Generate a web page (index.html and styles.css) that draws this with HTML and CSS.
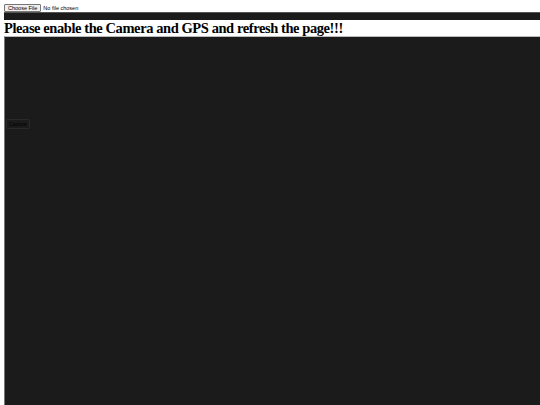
FILE: index.html
```html
<!DOCTYPE html>
<html>
<head>
<meta charset="utf-8">
<link rel="stylesheet" href="styles.css">
</head>
<body>
<div class="file-row"><span class="file-btn">Choose File</span><span class="file-text">No file chosen</span></div>
<div class="bar"></div>
<h1 class="title">Please enable the Camera and GPS and refresh the page!!!</h1>
<div class="view">
  <span class="capture">Capture</span>
</div>
</body>
</html>
```
FILE: styles.css
```css
html, body { margin: 0; padding: 0; background: #fff; }
body { padding: 3px 0 0 4px; overflow: hidden; height: 405px; box-sizing: border-box; }
.file-row { display: flex; align-items: center; height: 9px; font-family: "Liberation Sans", Arial, sans-serif; font-size: 5.5px; color: #000; }
.file-btn { display: inline-flex; align-items: center; height: 8px; padding: 0 3px; background: #efefef; border: 0.5px solid #767676; border-radius: 1px; box-sizing: border-box; }
.file-text { margin-left: 2px; }
.bar { height: 8px; background: #1b1b1b; border-top: 1px solid #555; box-sizing: border-box; }
.title { margin: 0; height: 16px; line-height: 17px; font-family: "Liberation Serif", "Times New Roman", serif; font-size: 14.5px; letter-spacing: -0.42px; font-weight: bold; color: #000; white-space: nowrap; }
.view { height: 369px; background: #1b1b1b; border-top: 1px solid #bbb; border-left: 1px solid #777; box-sizing: border-box; position: relative; }
.capture { position: absolute; left: 1px; top: 82px; height: 8px; padding: 0 2px; font-family: "Liberation Sans", Arial, sans-serif; font-size: 5px; line-height: 8px; color: #000; border: 0.5px solid #2a2a2a; border-radius: 1.5px; background: #1b1b1b; }
```
